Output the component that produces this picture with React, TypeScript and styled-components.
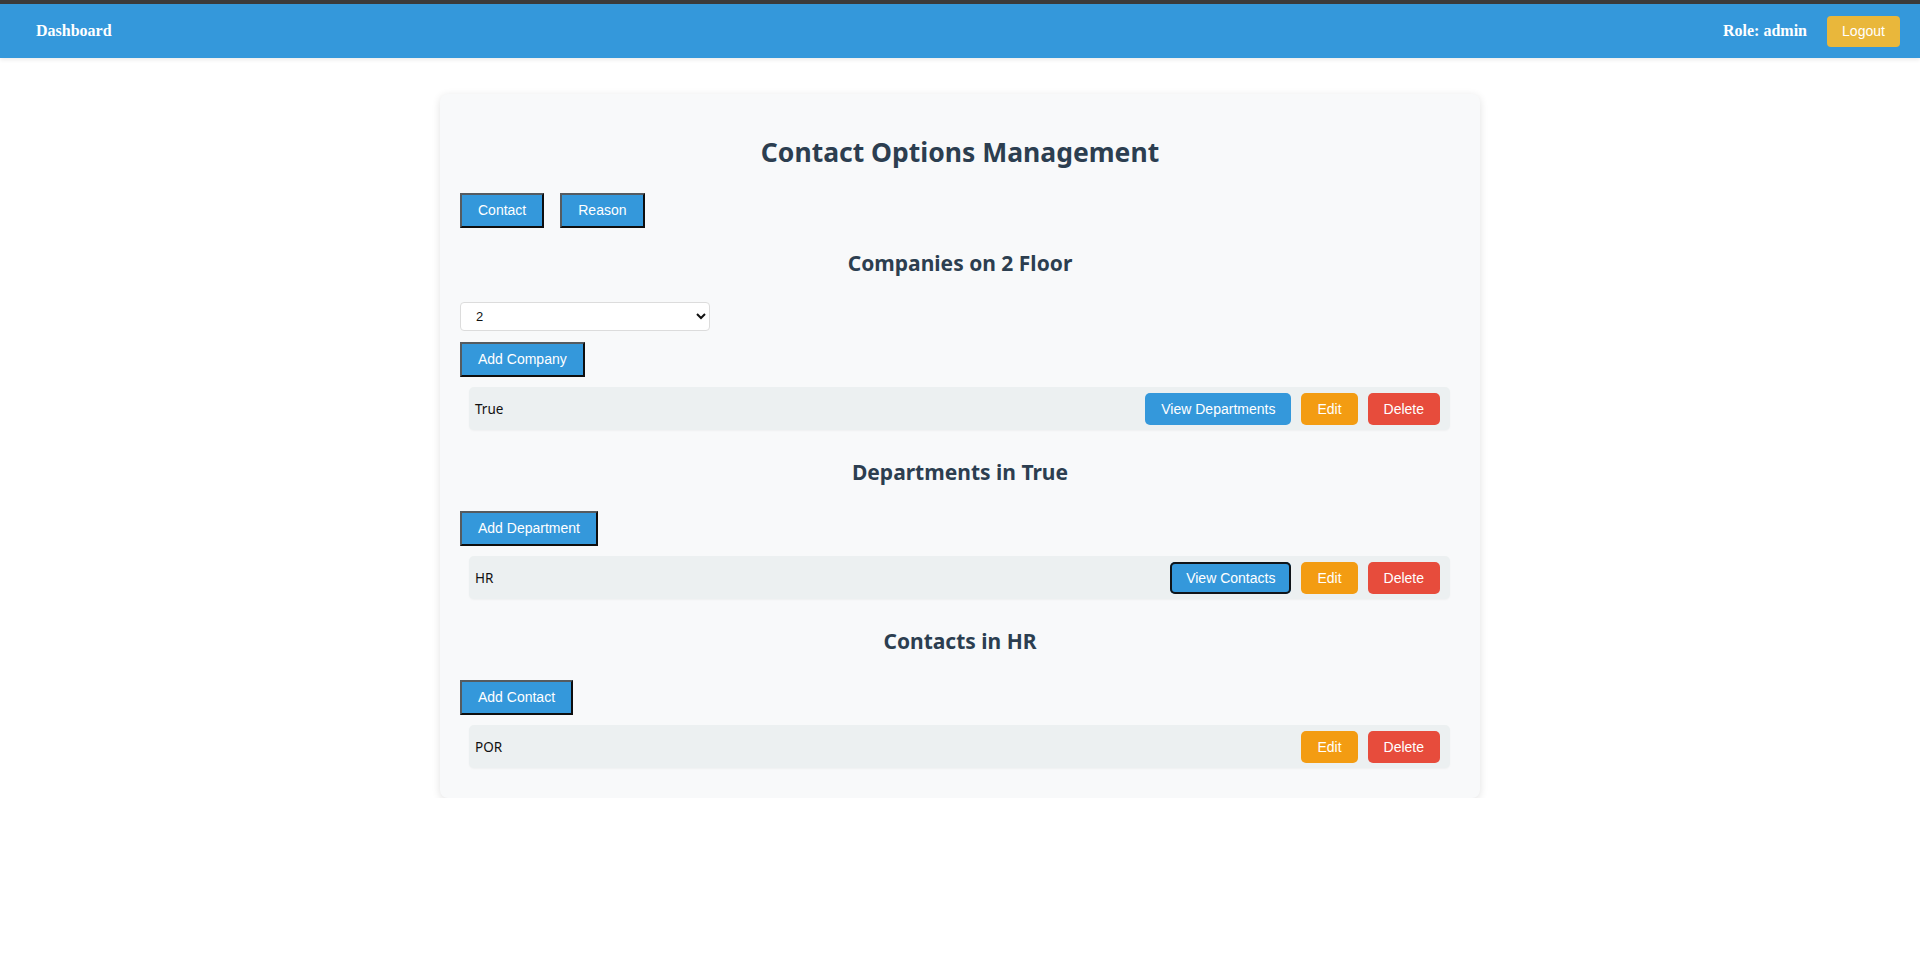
import React from 'react';
import styled, { createGlobalStyle } from 'styled-components';

const GlobalStyle = createGlobalStyle`
  body {
    margin: 0;
    background: #ffffff;
    font-family: "Noto Sans", "Open Sans", sans-serif;
  }
`;

const NavBar = styled.nav`
  display: flex;
  align-items: center;
  justify-content: space-between;
  height: 54px;
  padding: 0 20px 0 36px;
  background-color: #3498db;
  border-top: 4px solid #3b3b3b;
  box-shadow: 0 2px 4px rgba(0, 0, 0, 0.08);
  font-family: "Liberation Serif", serif;
  color: #ffffff;
`;

const Brand = styled.div`
  font-size: 16px;
  font-weight: bold;
`;

const NavRight = styled.div`
  display: flex;
  align-items: center;
  gap: 20px;
`;

const Role = styled.span`
  font-size: 16px;
  font-weight: bold;
`;

const LogoutButton = styled.button`
  width: 73px;
  height: 31px;
  border: none;
  border-radius: 4px;
  background-color: #e9b73b;
  color: #ffffff;
  font-family: "Liberation Sans", Arial, sans-serif;
  font-size: 14px;
  cursor: pointer;
`;

const Card = styled.main`
  width: 1000px;
  margin: 36px auto 0;
  padding: 20px 20px 20px;
  background-color: #f8f9fa;
  border-radius: 8px;
  box-shadow: 0 2px 8px rgba(0, 0, 0, 0.12);
`;

const Title = styled.h1`
  margin: 19px 0 22px;
  text-align: center;
  font-size: 26.5px;
  line-height: 38px;
  font-weight: 700;
  color: #2c3e50;
`;

const Tabs = styled.div`
  display: flex;
  gap: 16px;
`;

const PlainButton = styled.button`
  padding: 8px 16px;
  background-color: #3498db;
  color: #ffffff;
  font-family: "Liberation Sans", Arial, sans-serif;
  font-size: 14px;
  line-height: 15px;
  border-width: 2px;
  border-style: solid;
  border-color: #555b60 #0e0e0e #0e0e0e #555b60;
  cursor: pointer;
`;

const SectionHeading = styled.h2<{ $top?: number }>`
  margin: ${(p) => p.$top ?? 27}px 0 24px;
  text-align: center;
  font-size: 21px;
  line-height: 30px;
  font-weight: 700;
  color: #2c3e50;
`;

const FloorSelect = styled.select`
  display: block;
  width: 250px;
  height: 29px;
  margin-bottom: 11px;
  padding: 0 8px 0 11px;
  border: 1px solid #dcdcdc;
  border-radius: 4px;
  background-color: #ffffff;
  font-family: "Liberation Sans", Arial, sans-serif;
  font-size: 13px;
  color: #111;
`;

const List = styled.ul`
  list-style: none;
  margin: 10px 0 0;
  padding: 0;
`;

const Row = styled.li`
  display: flex;
  align-items: center;
  justify-content: space-between;
  height: 43px;
  margin: 0 10px 10px 9px;
  padding: 0 10px 0 6px;
  background-color: #ecf0f1;
  border-radius: 5px;
  box-shadow: 0 1px 2px rgba(0, 0, 0, 0.04);
  font-size: 13.5px;
  color: #111;
`;

const Actions = styled.div`
  display: flex;
  gap: 10px;
`;

const colors = {
  blue: '#3498db',
  orange: '#f39c12',
  red: '#e74c3c',
};

const ActionButton = styled.button<{ $tone: keyof typeof colors; $focused?: boolean }>`
  height: 32px;
  padding: 0 16px;
  border: none;
  border-radius: 5px;
  background-color: ${(p) => colors[p.$tone]};
  color: #ffffff;
  font-family: "Liberation Sans", Arial, sans-serif;
  font-size: 14px;
  cursor: pointer;
  box-shadow: ${(p) => (p.$focused ? 'inset 0 0 0 2px #101418' : 'none')};
`;

type Item = { name: string; view?: string; focused?: boolean };

const ItemRow: React.FC<{ item: Item }> = ({ item }) => (
  <Row>
    <span>{item.name}</span>
    <Actions>
      {item.view && (
        <ActionButton $tone="blue" $focused={item.focused}>
          {item.view}
        </ActionButton>
      )}
      <ActionButton $tone="orange">Edit</ActionButton>
      <ActionButton $tone="red">Delete</ActionButton>
    </Actions>
  </Row>
);

export default function App() {
  return (
    <>
      <GlobalStyle />
      <NavBar>
        <Brand>Dashboard</Brand>
        <NavRight>
          <Role>Role: admin</Role>
          <LogoutButton>Logout</LogoutButton>
        </NavRight>
      </NavBar>

      <Card>
        <Title>Contact Options Management</Title>
        <Tabs>
          <PlainButton>Contact</PlainButton>
          <PlainButton>Reason</PlainButton>
        </Tabs>

        <SectionHeading $top={20}>Companies on 2 Floor</SectionHeading>
        <FloorSelect defaultValue="2">
          <option value="1">1</option>
          <option value="2">2</option>
          <option value="3">3</option>
        </FloorSelect>
        <PlainButton>Add Company</PlainButton>
        <List>
          <ItemRow item={{ name: 'True', view: 'View Departments' }} />
        </List>

        <SectionHeading>Departments in True</SectionHeading>
        <PlainButton>Add Department</PlainButton>
        <List>
          <ItemRow item={{ name: 'HR', view: 'View Contacts', focused: true }} />
        </List>

        <SectionHeading>Contacts in HR</SectionHeading>
        <PlainButton>Add Contact</PlainButton>
        <List>
          <ItemRow item={{ name: 'POR' }} />
        </List>
      </Card>
    </>
  );
}
